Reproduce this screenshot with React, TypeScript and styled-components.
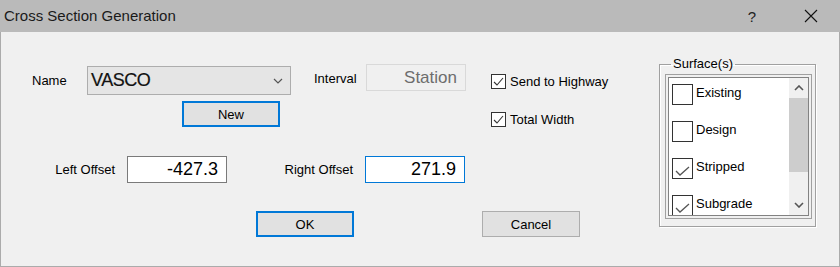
import React from 'react';
import styled, { createGlobalStyle } from 'styled-components';

const GlobalStyle = createGlobalStyle`
  html, body {
    margin: 0;
    padding: 0;
    background: #f0f0f0;
  }
  * {
    box-sizing: border-box;
  }
`;

const surfaces = [
  { name: 'Existing', checked: false },
  { name: 'Design', checked: false },
  { name: 'Stripped', checked: true },
  { name: 'Subgrade', checked: true },
];

export default function App() {
  return (
    <Window>
      <GlobalStyle />
      <TitleBar>
        <Title>Cross Section Generation</Title>
        <TitleButtons>
          <HelpGlyph>?</HelpGlyph>
          <CloseIcon width="14" height="14" viewBox="0 0 14 14">
            <path d="M1 1 L13 13 M13 1 L1 13" stroke="#111" strokeWidth="1.1" fill="none" />
          </CloseIcon>
        </TitleButtons>
      </TitleBar>
      <Body>
        <Main>
          <TopRow>
            <NameCol>
              <NameLine>
                <Label $width={55} $shift={0}>Name</Label>
                <Combo>
                  <ComboText>VASCO</ComboText>
                  <svg width="10" height="6" viewBox="0 0 10 6">
                    <polyline points="1,1 5,5 9,1" stroke="#555" strokeWidth="1.2" fill="none" />
                  </svg>
                </Combo>
              </NameLine>
              <Button $default $offset={150} $top={6}>New</Button>
            </NameCol>
            <IntervalGroup>
              <Label $width={52} $shift={3}>Interval</Label>
              <ReadOnlyBox>Station</ReadOnlyBox>
            </IntervalGroup>
            <Checks>
              <CheckRow>
                <SmallBox>
                  <CheckMark />
                </SmallBox>
                <span>Send to Highway</span>
              </CheckRow>
              <CheckRow>
                <SmallBox>
                  <CheckMark />
                </SmallBox>
                <span>Total Width</span>
              </CheckRow>
            </Checks>
          </TopRow>
          <OffsetRow>
            <Field $labelWidth={114}>
              <FieldLabel>Left Offset</FieldLabel>
              <NumberBox>-427.3</NumberBox>
            </Field>
            <Field $labelWidth={126}>
              <FieldLabel>Right Offset</FieldLabel>
              <NumberBox $focused>271.9</NumberBox>
            </Field>
          </OffsetRow>
          <ButtonRow>
            <Button $default $offset={255}>OK</Button>
            <Button $offset={128}>Cancel</Button>
          </ButtonRow>
        </Main>
        <GroupBox>
          <Legend>Surface(s)</Legend>
          <ListOuter>
            <ListInner>
              <Items>
                {surfaces.map((s) => (
                  <Item key={s.name}>
                    <BigBox>{s.checked && <CheckMark $list />}</BigBox>
                    <ItemText>{s.name}</ItemText>
                  </Item>
                ))}
              </Items>
              <ScrollBar>
                <ScrollArrow>
                  <svg width="10" height="6" viewBox="0 0 10 6">
                    <polyline points="1,5 5,1 9,5" stroke="#555" strokeWidth="1.6" fill="none" />
                  </svg>
                </ScrollArrow>
                <Thumb />
                <Track />
                <ScrollArrow>
                  <svg width="10" height="6" viewBox="0 0 10 6">
                    <polyline points="1,1 5,5 9,1" stroke="#555" strokeWidth="1.6" fill="none" />
                  </svg>
                </ScrollArrow>
              </ScrollBar>
            </ListInner>
          </ListOuter>
        </GroupBox>
      </Body>
    </Window>
  );
}

function CheckMark({ $list }: { $list?: boolean }) {
  return $list ? (
    <svg width="19" height="19" viewBox="0 0 19 19">
      <polyline points="3,12 7,16 16,8" stroke="#555" strokeWidth="1.3" fill="none" />
    </svg>
  ) : (
    <svg width="13" height="13" viewBox="0 0 13 13">
      <polyline points="2,7 5,10 11,3" stroke="#333" strokeWidth="1.1" fill="none" />
    </svg>
  );
}

const Window = styled.div`
  width: 840px;
  height: 267px;
  display: flex;
  flex-direction: column;
  font-family: 'Liberation Sans', Arial, sans-serif;
  font-size: 13px;
  color: #000;
  background: #f0f0f0;
`;

const TitleBar = styled.div`
  height: 32px;
  background: #bababa;
  display: flex;
  align-items: center;
  justify-content: space-between;
  padding: 0 0 0 4px;
`;

const Title = styled.div`
  font-size: 15px;
  color: #1a1a1a;
  padding-bottom: 2px;
`;

const TitleButtons = styled.div`
  display: flex;
  align-items: center;
`;

const HelpGlyph = styled.span`
  font-size: 15px;
  color: #222;
  margin-right: 48px;
`;

const CloseIcon = styled.svg`
  margin-right: 22px;
`;

const Body = styled.div`
  flex: 1;
  display: flex;
  align-items: flex-start;
  border: 1px solid #ababab;
  border-top: none;
`;

const Main = styled.div`
  width: 658px;
  display: flex;
  flex-direction: column;
  padding-top: 34px;
`;

const TopRow = styled.div`
  display: flex;
  align-items: flex-start;
`;

const NameCol = styled.div`
  display: flex;
  flex-direction: column;
  margin-left: 31px;
`;

const NameLine = styled.div`
  display: flex;
  align-items: center;
`;

const Label = styled.span<{ $width: number; $shift: number }>`
  width: ${(p) => p.$width}px;
  line-height: 16px;
  padding-top: ${(p) => p.$shift}px;
`;

const Combo = styled.div`
  width: 204px;
  height: 29px;
  background: #e5e5e5;
  border: 1px solid #adadad;
  display: flex;
  align-items: center;
  justify-content: space-between;
  padding: 0 7px 0 3px;
`;

const ComboText = styled.span`
  font-size: 18px;
  letter-spacing: -0.5px;
  color: #111;
  -webkit-text-stroke: 0.2px #111;
`;

const Button = styled.button<{ $default?: boolean; $offset: number; $top?: number }>`
  width: 98px;
  height: 26px;
  margin-left: ${(p) => p.$offset}px;
  margin-top: ${(p) => p.$top ?? 0}px;
  background: #e1e1e1;
  border: ${(p) => (p.$default ? '2px solid #0078d7' : '1px solid #adadad')};
  font-family: 'Liberation Sans', Arial, sans-serif;
  font-size: 13px;
  color: #000;
  padding: 0;
`;

const IntervalGroup = styled.div`
  display: flex;
  align-items: center;
  margin-left: 23px;
  margin-top: -2px;
`;

const ReadOnlyBox = styled.div`
  width: 100px;
  height: 27px;
  border: 1px solid #d9d9d9;
  background: #f0f0f0;
  color: #6d6d6d;
  font-size: 17px;
  text-align: right;
  padding-right: 8px;
  line-height: 25px;
`;

const Checks = styled.div`
  display: flex;
  flex-direction: column;
  gap: 23px;
  margin-left: 25px;
  margin-top: 8px;
`;

const CheckRow = styled.div`
  display: flex;
  align-items: center;
  gap: 4px;
  height: 15px;
`;

const SmallBox = styled.div`
  width: 15px;
  height: 15px;
  border: 1px solid #333;
  background: #fff;
  display: flex;
  align-items: center;
  justify-content: center;
`;

const OffsetRow = styled.div`
  display: flex;
  align-items: center;
  margin-top: 29px;
`;

const Field = styled.div<{ $labelWidth: number }>`
  display: flex;
  align-items: center;
  & > span {
    width: ${(p) => p.$labelWidth}px;
  }
`;

const FieldLabel = styled.span`
  text-align: right;
  margin-right: 12px;
`;

const NumberBox = styled.div<{ $focused?: boolean }>`
  width: 100px;
  height: 27px;
  background: #fff;
  border: 1px solid ${(p) => (p.$focused ? '#0078d7' : '#7a7a7a')};
  font-size: 18px;
  text-align: right;
  padding-right: 8px;
  line-height: 25px;
  color: #000;
`;

const ButtonRow = styled.div`
  display: flex;
  margin-top: 28px;
`;

const GroupBox = styled.fieldset`
  margin: 25px 0 0 0;
  width: 157px;
  border: 1px solid #a0a0a0;
  box-shadow: inset 1px 1px 0 #fff, 1px 1px 0 #fff;
  padding: 0 3px 7px 5px;
  min-width: 0;
`;

const Legend = styled.legend`
  font-size: 13px;
  line-height: 14px;
  padding: 0 2px;
  margin-left: 6px;
`;

const ListOuter = styled.div`
  margin-top: 3px;
  height: 145px;
  border: 1px solid #a0a0a0;
  padding: 2px;
  background: #f0f0f0;
`;

const ListInner = styled.div`
  height: 100%;
  border: 1px solid #828282;
  background: #fff;
  display: flex;
  overflow: hidden;
`;

const Items = styled.div`
  flex: 1;
  display: flex;
  flex-direction: column;
  gap: 16px;
  padding: 6px 0 0 3px;
`;

const Item = styled.div`
  display: flex;
  align-items: flex-start;
  gap: 3px;
  height: 21px;
  flex-shrink: 0;
`;

const BigBox = styled.div`
  width: 21px;
  height: 21px;
  border: 1px solid #333;
  background: #fff;
`;

const ItemText = styled.span`
  line-height: 16px;
  margin-top: 1px;
`;

const ScrollBar = styled.div`
  width: 19px;
  display: flex;
  flex-direction: column;
  background: #f0f0f0;
`;

const ScrollArrow = styled.div`
  height: 20px;
  display: flex;
  align-items: center;
  justify-content: center;
`;

const Thumb = styled.div`
  height: 74px;
  background: #cdcdcd;
`;

const Track = styled.div`
  flex: 1;
`;
